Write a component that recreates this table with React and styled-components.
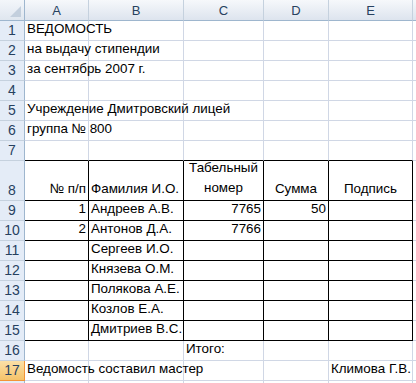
import React from 'react';
import styled, { createGlobalStyle } from 'styled-components';

const Global = createGlobalStyle`
  body {
    margin: 0;
    background: #fff;
    font-family: "Liberation Sans", Arial, sans-serif;
    overflow: hidden;
  }
`;

const Sheet = styled.div`
  display: grid;
  grid-template-columns: 25px 64px 95px 80px 65px 84px 1fr;
  grid-template-rows: 21px repeat(7, 20px) 40px repeat(10, 20px);
  width: 416px;
  height: 383px;
  overflow: hidden;
  font-size: 13.4px;
  color: #000;
`;

const Corner = styled.div`
  position: relative;
  background: linear-gradient(#f3f6fa, #dfe6ef);
  border-right: 1px solid #9eb6ce;
  border-bottom: 1px solid #9eb6ce;

  &::after {
    content: '';
    position: absolute;
    right: 3px;
    bottom: 3px;
    border-style: solid;
    border-width: 0 0 11px 11px;
    border-color: transparent transparent #c3cfdd transparent;
  }
`;

const ColHead = styled.div`
  display: flex;
  align-items: center;
  justify-content: center;
  background: linear-gradient(#f6f8fb, #dde4ee);
  border-right: 1px solid #c5d1de;
  border-bottom: 1px solid #9eb6ce;
  color: #27415f;
  font-size: 13px;
`;

const RowHead = styled.div`
  display: flex;
  align-items: flex-end;
  justify-content: center;
  padding-bottom: 2px;
  box-sizing: border-box;
  background: ${p => (p.$active ? 'linear-gradient(#fbe0a7, #f5c36a)' : '#e4ecf7')};
  border-right: 1px solid ${p => (p.$active ? '#f29436' : '#9eb6ce')};
  border-bottom: 1px solid ${p => (p.$active ? '#f29436' : '#c5d1de')};
  color: #27415f;
  font-size: 14px;
`;

const Cell = styled.div`
  display: flex;
  flex-direction: column;
  justify-content: flex-end;
  align-items: ${p => (p.$align === 'right' ? 'flex-end' : p.$align === 'center' ? 'center' : 'flex-start')};
  text-align: ${p => p.$align || 'left'};
  box-sizing: border-box;
  padding: 0 2px 2px 2px;
  border-right: 1px solid ${p => (p.$bR ? '#000' : '#d0d7e5')};
  border-bottom: 1px solid ${p => (p.$bB ? '#000' : '#d0d7e5')};
  white-space: nowrap;
  overflow: visible;
  line-height: 18px;
  position: relative;
  z-index: ${p => (p.$text ? 1 : 0)};
`;

const Lines = styled.span`
  display: flex;
  flex-direction: column;
  align-items: center;
  line-height: 20px;
`;

const cols = ['A', 'B', 'C', 'D', 'E', ''];

const data = {
  1: { A: 'ВЕДОМОСТЬ' },
  2: { A: 'на выдачу стипендии' },
  3: { A: 'за сентябрь 2007 г.' },
  5: { A: 'Учреждение Дмитровский лицей' },
  6: { A: 'группа № 800' },
  8: { A: ['№ п/п', 'right'], B: 'Фамилия И.О.', C: ['Табельный|номер', 'center'], D: ['Сумма', 'center'], E: ['Подпись', 'center'] },
  9: { A: ['1', 'right'], B: 'Андреев А.В.', C: ['7765', 'right'], D: ['50', 'right'] },
  10: { A: ['2', 'right'], B: 'Антонов Д.А.', C: ['7766', 'right'] },
  11: { B: 'Сергеев И.О.' },
  12: { B: 'Князева О.М.' },
  13: { B: 'Полякова А.Е.' },
  14: { B: 'Козлов Е.А.' },
  15: { B: 'Дмитриев В.С.' },
  16: { C: 'Итого:' },
  17: { A: 'Ведомость составил мастер', E: 'Климова Г.В.' },
};

function renderCell(row, col) {
  const entry = (data[row] || {})[col];
  const text = Array.isArray(entry) ? entry[0] : entry;
  const align = Array.isArray(entry) ? entry[1] : 'left';
  const inTable = col && row >= 8 && row <= 15;
  const bottomBlack = col && (inTable || row === 7);
  return (
    <Cell key={row + col} $align={align} $bR={inTable} $bB={bottomBlack} $text={!!text}>
      {text && text.includes('|') ? (
        <Lines>{text.split('|').map(t => <span key={t}>{t}</span>)}</Lines>
      ) : text}
    </Cell>
  );
}

export default function App() {
  const rows = Array.from({ length: 18 }, (_, i) => i + 1);
  return (
    <>
      <Global />
      <Sheet>
        <Corner />
        {cols.map((c, i) => <ColHead key={'h' + i}>{c}</ColHead>)}
        {rows.map(r => (
          <React.Fragment key={r}>
            <RowHead $active={r === 17}>{r < 18 ? r : ''}</RowHead>
            {cols.map(c => renderCell(r, c))}
          </React.Fragment>
        ))}
      </Sheet>
    </>
  );
}
